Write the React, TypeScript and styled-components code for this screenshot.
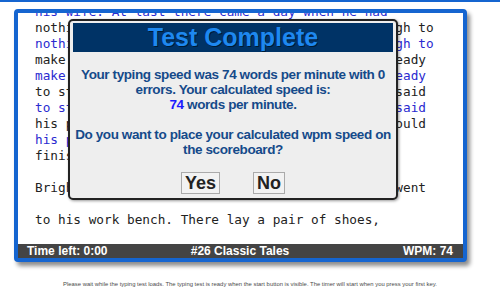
import React from 'react';
import styled, { createGlobalStyle } from 'styled-components';

const GlobalStyle = createGlobalStyle`
  html, body {
    margin: 0;
    padding: 0;
    background: #ffffff;
  }
  body {
    font-family: 'Liberation Sans', Arial, sans-serif;
  }
`;

const Page = styled.div`
  width: 500px;
  height: 293px;
  overflow: hidden;
  display: flex;
  flex-direction: column;
`;

const TopRule = styled.div`
  height: 2px;
  background: #1565d0;
`;

const TestBox = styled.div`
  position: relative;
  margin: 7px 0 0 14px;
  width: 445px;
  height: 245px;
  border: 4px solid #1565d0;
  border-radius: 4px;
  background: #ffffff;
  box-shadow: 3px 4px 4px rgba(0, 0, 0, 0.45);
  display: flex;
  flex-direction: column;
  overflow: hidden;
`;

const TextArea = styled.div`
  flex: 1;
  overflow: hidden;
  padding-left: 17px;
`;

const TextScroll = styled.div`
  margin-top: -9px;
  font-family: 'DejaVu Sans Mono', monospace;
  font-size: 12.74px;
  line-height: 16px;
  white-space: pre;
`;

const Line = styled.div<{ $typed?: boolean }>`
  height: 16px;
  color: ${(p) => (p.$typed ? '#2a2ad0' : '#222222')};
`;

const StatusBar = styled.div`
  height: 14px;
  background: #444444;
  color: #ffffff;
  font-weight: bold;
  font-size: 12px;
  line-height: 14px;
  display: grid;
  grid-template-columns: 1fr auto 1fr;
  padding: 0 10px 0 9px;
`;

const StatusItem = styled.span<{ $align: string }>`
  text-align: ${(p) => p.$align};
  white-space: nowrap;
`;

const Dialog = styled.div`
  position: absolute;
  left: 50px;
  top: 6px;
  width: 320px;
  height: 175px;
  border: 2px solid #222222;
  border-radius: 5px;
  background: #eeeeee;
  box-shadow: 1px 1px 3px rgba(0, 0, 0, 0.4);
  padding: 2px 3px 0 3px;
  display: flex;
  flex-direction: column;
  align-items: center;
`;

const Header = styled.div`
  align-self: stretch;
  height: 29px;
  background: #003366;
  color: #1e88f0;
  font-weight: bold;
  font-size: 25px;
  line-height: 29px;
  text-align: center;
  text-shadow: 1px 1px 0 #001a33;
`;

const Message = styled.div`
  margin-top: 15px;
  color: #154a8a;
  font-weight: bold;
  font-size: 13.5px;
  letter-spacing: -0.4px;
  line-height: 15px;
  text-align: center;
  white-space: nowrap;
`;

const Speed = styled.span`
  color: #1a1aff;
`;

const Gap = styled.div`
  height: 15px;
`;

const Buttons = styled.div`
  margin-top: 15px;
  display: flex;
  gap: 33px;
`;

const Button = styled.button`
  height: 22px;
  padding: 0 3px;
  border: 1px solid #aaaaaa;
  background: #f2f2f2;
  color: #222222;
  font-family: 'Liberation Sans', Arial, sans-serif;
  font-size: 18px;
  line-height: 20px;
  font-weight: bold;
`;

const Footer = styled.div`
  margin-top: 19px;
  text-align: center;
  color: #4a4a4a;
  font-size: 5.9px;
`;

const lines: { text: string; typed?: boolean }[] = [
  { text: 'his wife. At last there came a day when he had', typed: true },
  { text: 'nothing left but a piece of leather - just enough to' },
  { text: 'nothing left but a piece of leather - just enough to', typed: true },
  { text: 'make one pair of shoes. He cut out the shoes, ready' },
  { text: 'make one pair of shoes. He cut out the shoes, ready', typed: true },
  { text: 'to stitch them the following morning, and then said' },
  { text: 'to stitch them the following morning, and then said', typed: true },
  { text: 'his prayers and lay down to sleep, so that he could' },
  { text: 'his prayers and lay down to', typed: true },
  { text: 'finish the shoes in the morning.' },
  { text: '', typed: true },
  { text: 'Bright and early the next morning, the cobbler went' },
  { text: '', typed: true },
  { text: 'to his work bench. There lay a pair of shoes,' },
  { text: '', typed: true },
];

export default function App() {
  return (
    <Page>
      <GlobalStyle />
      <TopRule />
      <TestBox>
        <TextArea>
          <TextScroll>
            {lines.map((l, i) => (
              <Line key={i} $typed={l.typed}>
                {l.text}
              </Line>
            ))}
          </TextScroll>
        </TextArea>
        <StatusBar>
          <StatusItem $align='left'>Time left: 0:00</StatusItem>
          <StatusItem $align='center'>#26 Classic Tales</StatusItem>
          <StatusItem $align='right'>WPM: 74</StatusItem>
        </StatusBar>
        <Dialog>
          <Header>Test Complete</Header>
          <Message>
            Your typing speed was 74 words per minute with 0
            <br />
            errors. Your calculated speed is:
            <br />
            <Speed>74</Speed> words per minute.
            <Gap />
            Do you want to place your calculated wpm speed on
            <br />
            the scoreboard?
          </Message>
          <Buttons>
            <Button>Yes</Button>
            <Button>No</Button>
          </Buttons>
        </Dialog>
      </TestBox>
      <Footer>
        Please wait while the typing test loads. The typing test is ready when
        the start button is visible. The timer will start when you press your
        first key.
      </Footer>
    </Page>
  );
}
